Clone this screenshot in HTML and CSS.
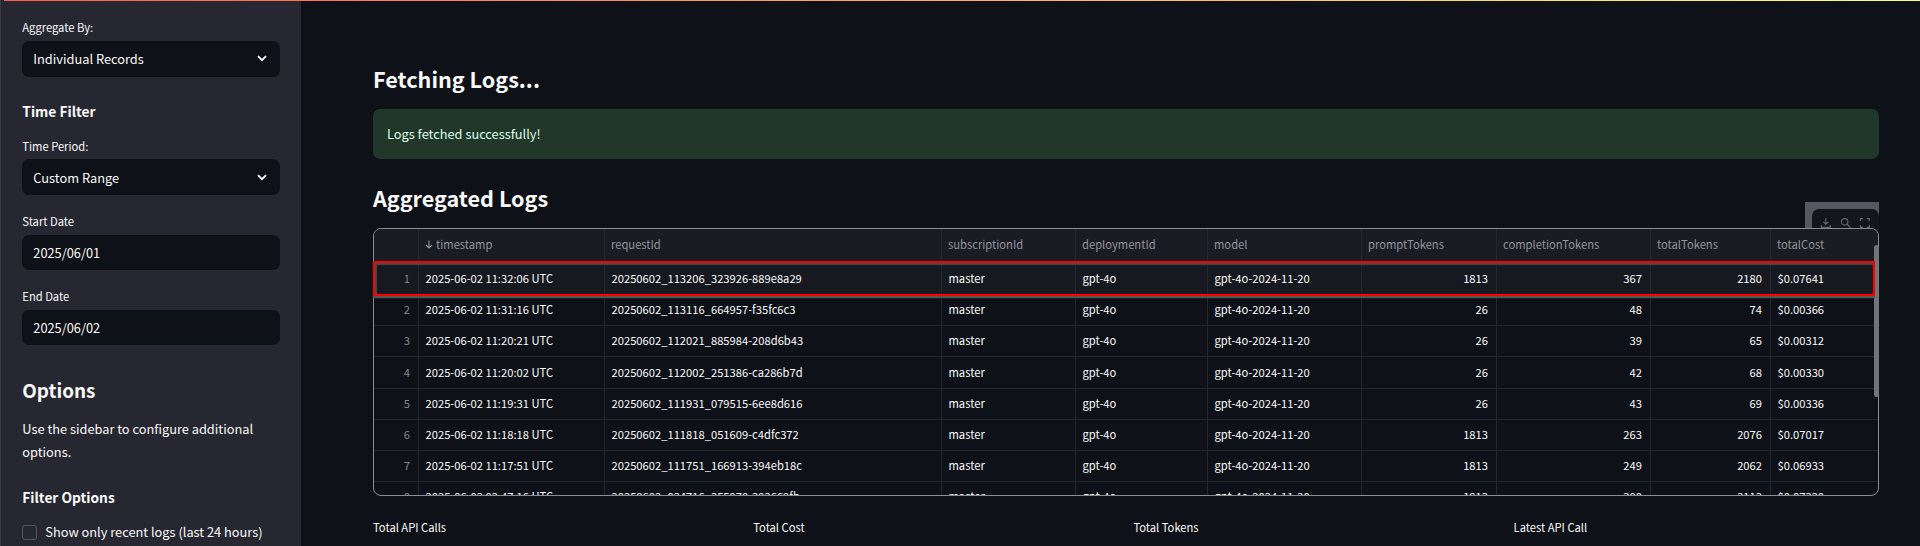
FILE: index.html
```html
<!DOCTYPE html>
<html lang="en">
<head>
<meta charset="utf-8">
<title>Aggregated Logs</title>
<link rel="stylesheet" href="styles.css">
</head>
<body>
<div class="app">
  <div class="decoration"></div>
  <aside class="sidebar">
    <label class="label">Aggregate By:</label>
    <div class="field first">Individual Records<svg class="chevron" viewBox="0 0 10 7"><path d="M1 1.2 5 5.2 9 1.2"/></svg></div>
    <h3 class="time-title">Time Filter</h3>
    <label class="label">Time Period:</label>
    <div class="field">Custom Range<svg class="chevron" viewBox="0 0 10 7"><path d="M1 1.2 5 5.2 9 1.2"/></svg></div>
    <label class="label next">Start Date</label>
    <div class="field date">2025/06/01</div>
    <label class="label next">End Date</label>
    <div class="field date">2025/06/02</div>
    <h2 class="options-title">Options</h2>
    <p class="hint">Use the sidebar to configure additional options.</p>
    <h3 class="filter-title">Filter Options</h3>
    <div class="check"><span class="box"></span>Show only recent logs (last 24 hours)</div>
  </aside>
  <main class="main">
    <h2 class="title">Fetching Logs...</h2>
    <div class="alert">Logs fetched successfully!</div>
    <h2 class="title second">Aggregated Logs</h2>
    <div class="frame">
      <div class="toolbar"><div class="tools">
        <svg viewBox="0 0 12 12"><path d="M6 1v6M3.500 4.800 6 7.300l2.500-2.500M1.500 8v2.500h9V8"/></svg>
        <svg viewBox="0 0 12 12"><circle cx="4.800" cy="4.800" r="3.300"/><path d="m7.300 7.300 3.700 3.700"/></svg>
        <svg viewBox="0 0 12 12"><path d="M1.500 4V1.500H4M8 1.500h2.500V4M10.500 8v2.500H8M4 10.500H1.500V8"/></svg>
      </div></div>
      <div class="table">
        <div class="row head"><span></span><span><svg class="sort" viewBox="0 0 8 9"><path d="M4 .5v7.500M1 5l3 3 3-3"/></svg>timestamp</span><span>requestId</span><span>subscriptionId</span><span>deploymentId</span><span>model</span><span>promptTokens</span><span>completionTokens</span><span>totalTokens</span><span>totalCost</span></div>
        <div class="row selected"><span>1</span><span>2025-06-02 11:32:06 UTC</span><span>20250602_113206_323926-889e8a29</span><span>master</span><span>gpt-4o</span><span>gpt-4o-2024-11-20</span><span>1813</span><span>367</span><span>2180</span><span>$0.07641</span></div>
        <div class="row"><span>2</span><span>2025-06-02 11:31:16 UTC</span><span>20250602_113116_664957-f35fc6c3</span><span>master</span><span>gpt-4o</span><span>gpt-4o-2024-11-20</span><span>26</span><span>48</span><span>74</span><span>$0.00366</span></div>
        <div class="row"><span>3</span><span>2025-06-02 11:20:21 UTC</span><span>20250602_112021_885984-208d6b43</span><span>master</span><span>gpt-4o</span><span>gpt-4o-2024-11-20</span><span>26</span><span>39</span><span>65</span><span>$0.00312</span></div>
        <div class="row"><span>4</span><span>2025-06-02 11:20:02 UTC</span><span>20250602_112002_251386-ca286b7d</span><span>master</span><span>gpt-4o</span><span>gpt-4o-2024-11-20</span><span>26</span><span>42</span><span>68</span><span>$0.00330</span></div>
        <div class="row"><span>5</span><span>2025-06-02 11:19:31 UTC</span><span>20250602_111931_079515-6ee8d616</span><span>master</span><span>gpt-4o</span><span>gpt-4o-2024-11-20</span><span>26</span><span>43</span><span>69</span><span>$0.00336</span></div>
        <div class="row"><span>6</span><span>2025-06-02 11:18:18 UTC</span><span>20250602_111818_051609-c4dfc372</span><span>master</span><span>gpt-4o</span><span>gpt-4o-2024-11-20</span><span>1813</span><span>263</span><span>2076</span><span>$0.07017</span></div>
        <div class="row"><span>7</span><span>2025-06-02 11:17:51 UTC</span><span>20250602_111751_166913-394eb18c</span><span>master</span><span>gpt-4o</span><span>gpt-4o-2024-11-20</span><span>1813</span><span>249</span><span>2062</span><span>$0.06933</span></div>
        <div class="row"><span>8</span><span>2025-06-02 02:47:16 UTC</span><span>20250602_024716_355970-392669fb</span><span>master</span><span>gpt-4o</span><span>gpt-4o-2024-11-20</span><span>1813</span><span>300</span><span>2113</span><span>$0.07320</span></div>
      </div>
      <div class="scrollbar"></div>
      <div class="highlight"></div>
    </div>
    <div class="metrics">
      <div>Total API Calls</div>
      <div>Total Cost<div class="value">$</div></div>
      <div>Total Tokens</div>
      <div>Latest API Call</div>
    </div>
  </main>
</div>
</body>
</html>
```
FILE: styles.css
```css
* { box-sizing: border-box; }
body { margin: 0; background: #0e1117; color: #fafafa; font-family: "Noto Sans CJK JP", "Open Sans", sans-serif; font-size: 12.8px; }
h2, h3, p { margin: 0; }
.app { position: relative; display: flex; width: 1920px; height: 546px; overflow: hidden; border-left: 1px solid #3b3b3e; }
.decoration { position: absolute; top: 0; left: 3px; right: 0; height: 1px; background: linear-gradient(90deg, #ff5b4e, #fffd80); }
.sidebar { width: 300px; flex: none; background: #262730; padding: 17px 21px 0 21.3px; }
.label { display: block; font-size: 11.2px; line-height: 20px; }
.label.next { margin-top: 16px; }
.field { display: flex; align-items: center; justify-content: space-between; height: 36px; margin-top: 3px; padding: 0 13px 0 11px; border-radius: 7px; background: #0e1117; }
.field.first { margin-top: 4px; padding-bottom: 1.500px; }
.field.date { height: 35px; margin-top: 4px; }
.chevron { width: 10px; height: 7px; fill: none; stroke: #fafafa; stroke-width: 1.800; }
h3 { font-size: 13.750px; font-weight: 600; line-height: 22px; }
.time-title { margin: 23px 0 14px; }
.options-title { margin-top: 30px; font-size: 18.900px; font-weight: 600; line-height: 30px; }
.hint { margin-top: 12px; line-height: 23px; }
.filter-title { margin-top: 23px; }
.check { display: flex; align-items: center; gap: 9px; margin-top: 13px; line-height: 22px; white-space: nowrap; }
.box { width: 15px; height: 15px; border: 1px solid #55565e; border-radius: 3px; }
.check .box { flex: none; margin-right: -1px; }
.main { flex: 1; min-width: 0; padding: 62px 41px 0 72px; }
.title { font-size: 21.600px; line-height: 34px; font-weight: 600; }
.title.second { margin-top: 22px; }
.alert { display: flex; align-items: center; height: 50px; margin-top: 13px; padding: 0 0 1.500px 14px; border-radius: 7px; background: #20372a; color: #dffde9; }
.frame { position: relative; height: 268px; margin-top: 13px; }
.table { position: relative; height: 268px; overflow: hidden; border: 1px solid #8b8d93; border-radius: 8px; background: #0e1117; font-size: 11.200px; }
.row { display: grid; grid-template-columns: 45px 186px 337px 134px 132px 154px 135px 154px 120px 1fr; height: 31.200px; }
.row > span { padding: 0 8px 0 6.500px; line-height: 31px; border-right: 1px solid #23262d; border-bottom: 1px solid #23262d; white-space: nowrap; }
.row > span:last-child { border-right: 0; }
.row > span:first-child { color: #85878c; text-align: right; padding-right: 8px; }
.row:not(.head) > span:nth-child(n+7):nth-child(-n+9) { text-align: right; }
.head { height: 34px; background: #1a1c24; color: #93959a; }
.head > span { padding-left: 6px; line-height: 31px; }
.selected { background: #16191f; }
.sort { width: 8px; height: 9px; margin-right: 3px; fill: none; stroke: #93959a; stroke-width: 1.100; }
.toolbar { position: absolute; right: 0; top: -26px; width: 74px; height: 40px; padding: 7px 0 0 7px; background: #555860; }
.tools { display: flex; gap: 8px; height: 33px; padding: 8px 8px; border-radius: 7px 7px 0 0; background: #13161d; }
.tools svg { width: 12px; height: 12px; fill: none; stroke: #5f6268; stroke-width: 1.300; }
.scrollbar { position: absolute; right: 0; top: 17px; width: 5px; height: 152px; border-radius: 3px; background: #737478; }
.highlight { position: absolute; left: 0; top: 33px; width: 1502px; height: 35px; border: 2px solid #f00; box-shadow: 0 2px 1px #555, inset 1px 1px 1px 1px #4a4a4a; }
.metrics { display: grid; grid-template-columns: repeat(4, 380.200px); margin-top: 21px; font-size: 11.200px; line-height: 20px; }
.value { font-size: 29px; line-height: 42px; }
```
